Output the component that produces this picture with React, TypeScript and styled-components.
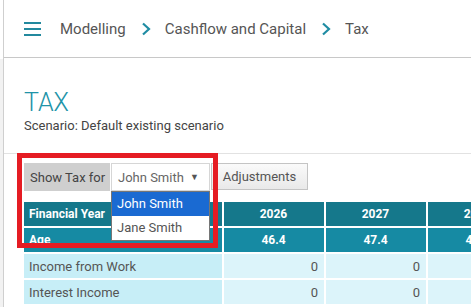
import React from "react"
import styled, { createGlobalStyle } from "styled-components"

const GlobalStyle = createGlobalStyle`
  html, body {
    margin: 0;
    padding: 0;
    overflow: hidden;
    background: #fff;
    font-family: Roboto, "Liberation Sans", sans-serif;
  }
`

const Root = styled.div`
  position: relative;
  display: flex;
  width: 471px;
  height: 307px;
  overflow: hidden;
`

const Rail = styled.div`
  flex: 0 0 3px;
  border-right: 1px solid #cfcfcf;
  background: linear-gradient(#fff 0 59px, #f2f2f2 59px);
`

const Main = styled.div`
  flex: 1 1 auto;
  min-width: 0;
`

const Header = styled.header`
  height: 58px;
  border-bottom: 1px solid #c8c8c8;
  display: flex;
  align-items: center;
  padding-left: 20px;
  padding-top: 1px;
  box-sizing: border-box;
`

const Burger = styled.span`
  display: inline-flex;
  flex-direction: column;
  gap: 4px;
  width: 17px;
  margin-right: 19px;
  span {
    height: 2px;
    background: #23899e;
  }
`

const Crumb = styled.span`
  font-size: 15px;
  color: #555;
`

const Chevron = styled.svg`
  width: 10px;
  height: 14px;
  margin: 0 14px 0 15px;
`

const Content = styled.div`
  padding-top: 30px;
`

const Title = styled.h1`
  margin: 0;
  padding-left: 20px;
  font-size: 25px;
  font-weight: 300;
  line-height: 30px;
  color: #2193a8;
`

const Scenario = styled.div`
  padding-left: 20px;
  font-size: 13px;
  line-height: 16px;
  color: #444;
`

const Divider = styled.div`
  margin-top: 19px;
  border-top: 1px solid #e2e2e2;
`

const Toolbar = styled.div`
  display: flex;
  align-items: stretch;
  height: 28px;
  margin: 9px 0 0 20px;
`

const Label = styled.div`
  width: 80px;
  padding-left: 6px;
  display: flex;
  align-items: center;
  background: #cfcfcf;
  color: #444;
  font-size: 13px;
`

const SelectBox = styled.div`
  position: relative;
  width: 99px;
  box-sizing: border-box;
  margin-left: 1px;
  border: 1px solid #d6d6d6;
  background: #fff;
  display: flex;
  align-items: center;
  justify-content: space-between;
  padding: 0 10px 0 6px;
  font-size: 13px;
  color: #666;
`

const Arrow = styled.span`
  font-size: 9px;
  color: #555;
`

const Menu = styled.ul`
  position: absolute;
  top: 27px;
  left: -1px;
  width: 99px;
  box-sizing: border-box;
  margin: 0;
  padding: 0;
  list-style: none;
  border: 1px solid #767676;
  background: #fff;
  z-index: 2;
`

const Option = styled.li<{ $active?: boolean }>`
  height: 24px;
  line-height: 24px;
  padding-left: 5px;
  font-size: 13px;
  background: ${p => (p.$active ? "#1a6ad2" : "#fff")};
  color: ${p => (p.$active ? "#fff" : "#555")};
`

const Button = styled.button`
  margin-left: 1px;
  width: 97px;
  height: 27px;
  border: 1px solid #c4c4c4;
  background: linear-gradient(#fafafa, #e9e9e9);
  font-family: inherit;
  font-size: 13px;
  color: #555;
  padding: 0 0 1px;
`

const Table = styled.table`
  width: 610px;
  margin: 9px 0 0 18px;
  border-collapse: separate;
  border-spacing: 2px;
  table-layout: fixed;
  font-size: 13px;
`

const Cell = styled.td<{ $kind: "head" | "age" | "label" | "data"; $align?: string }>`
  height: 24px;
  padding: 0 6px 0 5px;
  box-sizing: border-box;
  white-space: nowrap;
  overflow: hidden;
  text-align: ${p => p.$align || "left"};
  font-size: ${p => (p.$kind === "head" || p.$kind === "age" ? "12px" : "13px")};
  font-weight: ${p => (p.$kind === "head" || p.$kind === "age" ? 700 : 400)};
  color: ${p => (p.$kind === "head" || p.$kind === "age" ? "#fff" : "#555")};
  background: ${p =>
    p.$kind === "head"
      ? "#15788b"
      : p.$kind === "age"
      ? "#168aa3"
      : p.$kind === "label"
      ? "#c7eef7"
      : "#dcf4fa"};
`

const Highlight = styled.div`
  position: absolute;
  left: 17px;
  top: 153px;
  width: 201px;
  height: 95px;
  box-sizing: border-box;
  border: 5px solid #e51c23;
  pointer-events: none;
  z-index: 3;
`

const years = [2026, 2027, 2028, 2029]
const ages = ["46.4", "47.4", "48.4", "49.4"]
const rows = ["Income from Work", "Interest Income"]

const ChevronIcon = () => (
  <Chevron viewBox="0 0 10 14">
    <path d="M2 1.5 L8 7 L2 12.5" fill="none" stroke="#1f8ca3" strokeWidth="2.2" />
  </Chevron>
)

export default function App() {
  return (
    <Root>
      <GlobalStyle />
      <Rail />
      <Main>
        <Header>
          <Burger>
            <span />
            <span />
            <span />
          </Burger>
          <Crumb>Modelling</Crumb>
          <ChevronIcon />
          <Crumb>Cashflow and Capital</Crumb>
          <ChevronIcon />
          <Crumb>Tax</Crumb>
        </Header>
        <Content>
          <Title>TAX</Title>
          <Scenario>Scenario: Default existing scenario</Scenario>
          <Divider />
          <Toolbar>
            <Label>Show Tax for</Label>
            <SelectBox>
              John Smith
              <Arrow>▼</Arrow>
              <Menu>
                <Option $active>John Smith</Option>
                <Option>Jane Smith</Option>
              </Menu>
            </SelectBox>
            <Button>Adjustments</Button>
          </Toolbar>
          <Table>
            <colgroup>
              <col style={{ width: 198 }} />
              {years.map(y => (
                <col key={y} style={{ width: 100 }} />
              ))}
            </colgroup>
            <tbody>
              <tr>
                <Cell $kind="head">Financial Year</Cell>
                {years.map(y => (
                  <Cell key={y} $kind="head" $align="center">
                    {y}
                  </Cell>
                ))}
              </tr>
              <tr>
                <Cell $kind="age">Age</Cell>
                {ages.map(a => (
                  <Cell key={a} $kind="age" $align="center">
                    {a}
                  </Cell>
                ))}
              </tr>
              {rows.map(r => (
                <tr key={r}>
                  <Cell $kind="label">{r}</Cell>
                  {years.map(y => (
                    <Cell key={y} $kind="data" $align="right">
                      0
                    </Cell>
                  ))}
                </tr>
              ))}
            </tbody>
          </Table>
        </Content>
      </Main>
      <Highlight />
    </Root>
  )
}
